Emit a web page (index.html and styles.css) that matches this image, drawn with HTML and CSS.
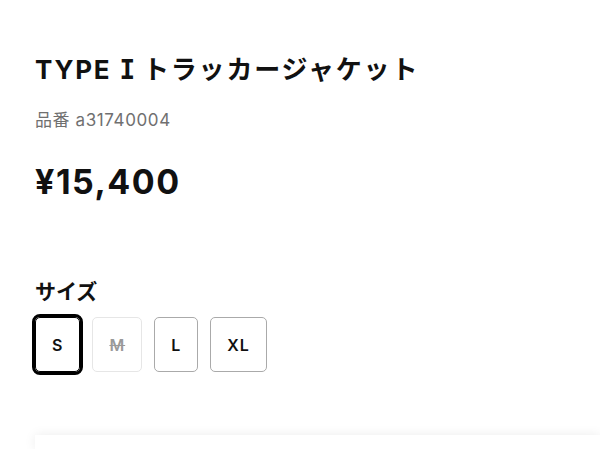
FILE: index.html
```html
<!DOCTYPE html>
<html lang="ja">
<head>
<meta charset="utf-8">
<link rel="stylesheet" href="styles.css">
</head>
<body>
<main class="product">
  <h1 class="title">TYPE <span class="numeral">I</span> トラッカージャケット</h1>
  <p class="code">品番 a31740004</p>
  <p class="price">¥15,400</p>
  <section class="size">
    <h2 class="size-label">サイズ</h2>
    <div class="size-options">
      <button class="opt selected">S</button>
      <button class="opt soldout">M</button>
      <button class="opt">L</button>
      <button class="opt">XL</button>
    </div>
  </section>
  <div class="panel"></div>
</main>
</body>
</html>
```
FILE: styles.css
```css
html, body { margin: 0; background: #fff; }
body {
  font-family: Inter, "Noto Sans CJK JP", sans-serif;
  color: #111;
  overflow: hidden;
}
.product { padding: 48px 0 0 35px; }
.title {
  margin: 0;
  font-size: 26px;
  font-weight: 700;
  letter-spacing: 1.8px;
  line-height: 44px;
}
.numeral {
  font-family: "DejaVu Sans Mono", monospace;
  letter-spacing: 0;
}
.code {
  margin: 16px 0 0;
  font-size: 17px;
  color: #707070;
  letter-spacing: 0.6px;
  line-height: 24px;
}
.price {
  margin: 28px 0 0;
  font-size: 34px;
  font-weight: 700;
  letter-spacing: 1.5px;
  line-height: 44px;
}
.size { margin-top: 74px; }
.size-label {
  margin: 0;
  font-size: 21px;
  font-weight: 700;
  line-height: 28px;
}
.size-options {
  display: flex;
  gap: 12px;
  margin-top: 11px;
  align-items: center;
}
.opt {
  font-family: inherit;
  font-size: 16px;
  font-weight: 600;
  letter-spacing: 1px;
  color: #111;
  background: #fff;
  border: 1px solid #aaa;
  border-radius: 5px;
  height: 55px;
  min-width: 44px;
  padding: 0 16px;
}
.opt.selected {
  border-color: #000;
  outline: 3px solid #000;
  border-radius: 5px;
}
.opt.soldout {
  color: #999;
  border-color: #e6e6e6;
  text-decoration: line-through;
}
.panel {
  margin-top: 63px;
  height: 14px;
  background: #fff;
  box-shadow: 0 0 12px rgba(0,0,0,0.08);
}
```
